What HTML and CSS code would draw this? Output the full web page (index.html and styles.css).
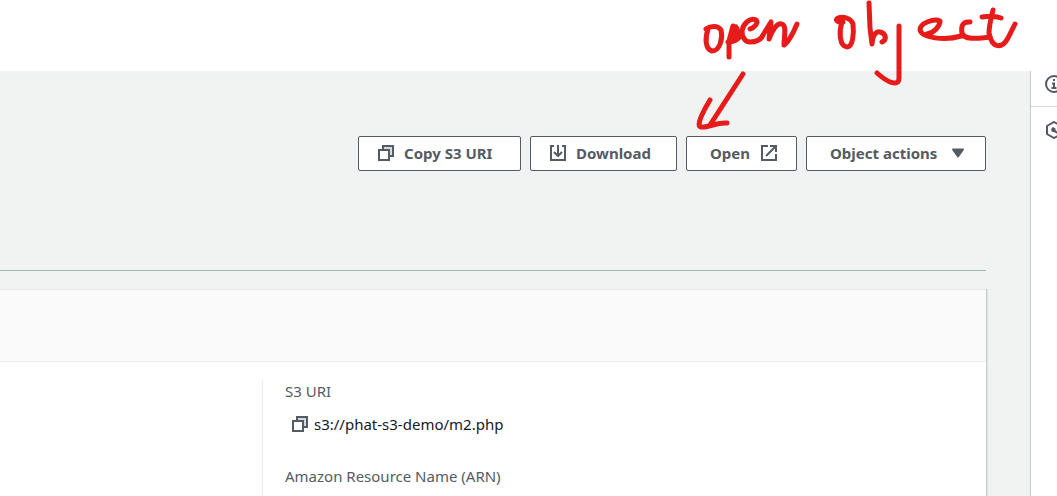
FILE: index.html
```html
<!DOCTYPE html>
<html lang="en">
<head>
<meta charset="utf-8">
<title>S3 object</title>
<link rel="stylesheet" href="styles.css">
</head>
<body>
<svg class="symbols" aria-hidden="true">
  <symbol id="copy" viewBox="0 0 16 16">
    <path fill="#d5dbdb" d="M5 5V1h10v10h-4V5z"/>
    <path d="M5 4V1h10v10h-3M1 5h10v10H1z"/>
  </symbol>
</svg>
<header class="topbar"></header>
<div class="shell">
  <main class="content">
    <div class="actions">
      <button class="btn btn-copy" type="button"><svg class="icon"><use href="#copy"/></svg>Copy S3 URI</button>
      <button class="btn btn-download" type="button"><svg class="icon" viewBox="0 0 16 16"><path d="M4 1H1v14h14V1h-3M8 0v11M4 7l4 4 4-4"/></svg>Download</button>
      <button class="btn btn-open" type="button">Open<svg class="icon" viewBox="0 0 16 16"><path d="M7 1H1v14h14V9M9 1h6v6M15 1L5 11"/></svg></button>
      <button class="btn btn-actions" type="button">Object actions<svg class="icon caret" viewBox="0 0 16 16"><path d="M3 4.500h10L8 11.500z"/></svg></button>
    </div>
    <section class="card">
      <div class="card-head"></div>
      <div class="card-body">
        <div></div>
        <dl class="details">
          <dt>S3 URI</dt>
          <dd><button class="copy" type="button" aria-label="Copy S3 URI"><svg class="icon"><use href="#copy"/></svg></button>s3://phat-s3-demo/m2.php</dd>
          <dt>Amazon Resource Name (ARN)</dt>
        </dl>
      </div>
    </section>
  </main>
  <aside class="rail">
    <button class="tool" type="button" aria-label="Info"><svg viewBox="0 0 18 18"><circle cx="9" cy="9" r="8"/><path d="M9 4v2M7 8.500h2V13M6.500 13h5"/></svg></button>
    <button class="tool" type="button" aria-label="Diagnose"><svg viewBox="0 0 18 18"><path d="M9 1l7 4v8l-7 4-7-4V5z"/><path class="solid" d="M6 8l2-2 2.500 1.500V9l3 3-1 1-3.500-2H7z"/></svg></button>
  </aside>
</div>
<svg class="ink" viewBox="0 0 340 140" role="img" aria-label="open object">
  <path d="M16 29C20 26 28 25 31 30C33 38 30 51 22 51C15 49 15 38 18 29"/>
  <path d="M43 26L39 41L39 57M38 42C44 40 50 32 46 27L40 40M38 42C46 42 50 38 52 32M60 29C64 28 69 23 66 20C60 17 53 24 52 31C52 37 55 42 60 42C67 42 71 40 73 35L81 22L79 39C82 31 87 22 92 24C97 26 94 37 94 45C99 42 104 31 107 24"/>
  <path d="M53 74L20 125M20 100C15 108 5 126 11 127C18 128 27 122 37 123"/>
  <path d="M153 22C148 23 144 20 148 18C153 16 161 18 163 24C164 33 163 47 157 47C149 46 149 31 152 22"/>
  <path d="M179 3L180 28L182 44C182 36 186 31 190 32C195 33 198 39 192 42"/>
  <path d="M209 26L209 78C209 87 198 83 187 73"/>
  <path d="M237 34C244 33 250 26 250 21C244 18 230 23 230 30C232 38 255 41 271 36M280 22C272 21 271 27 272 33C275 41 290 38 300 37"/>
  <path d="M303 10C301 18 299 26 299 33C302 49 312 49 318 38L325 24M292 17C299 16 306 16 311 18"/>
</svg>
</body>
</html>
```
FILE: styles.css
```css
* { box-sizing: border-box; }
html, body { height: 100%; }
body {
  margin: 0;
  display: flex;
  flex-direction: column;
  overflow: hidden;
  background: #fff;
  color: #16191f;
  font: 15px/22px "Noto Sans", "Open Sans", sans-serif;
}
.symbols { position: absolute; width: 0; height: 0; }
.topbar { flex: 0 0 71px; }
.shell { flex: 1; display: flex; min-height: 0; }
.content {
  flex: 1;
  display: flex;
  flex-direction: column;
  padding: 65px 44px 0 0;
  background: #f1f3f3;
}
.actions {
  display: flex;
  justify-content: flex-end;
  gap: 9px;
  padding-bottom: 99px;
  border-bottom: 1px solid #a2b8b6;
}
.btn {
  display: flex;
  align-items: center;
  gap: 10px;
  height: 35px;
  padding: 0 19px 2px;
  border: 1px solid #545b64;
  border-radius: 2px;
  background: #fff;
  color: #545b64;
  font: bold 15px/22px "Noto Sans", "Open Sans", sans-serif;
}
.btn-copy { width: 163px; }
.btn-download { width: 147px; }
.btn-open, .btn-actions { justify-content: space-between; padding-left: 23px; }
.btn-open { width: 111px; }
.btn-actions { width: 180px; }
.icon {
  flex: none;
  width: 16px;
  height: 16px;
  fill: none;
  stroke: #545b64;
  stroke-width: 2;
}
.caret path { fill: #545b64; stroke-linejoin: round; }
.card {
  flex: 1;
  display: flex;
  flex-direction: column;
  margin-top: 18px;
  border-top: 1px solid #e6eaea;
  background: #fff;
  box-shadow: 1px 0 0 #c3caca, 2px 0 1px #e3e7e7;
}
.card-head { height: 72px; background: #fafafa; border-bottom: 1px solid #eaeded; }
.card-body { flex: 1; display: grid; grid-template-columns: 262fr 724fr; padding-top: 18px; }
.details { margin: 0; padding-left: 22px; border-left: 1px solid #eaeded; }
.details dt { color: #545b64; }
.details dd { display: flex; align-items: center; gap: 6px; margin: 11px 0 30px; padding-left: 7px; }
.copy { display: flex; padding: 0; border: 0; background: none; }
.rail {
  flex: 0 0 27px;
  overflow: hidden;
  border-left: 1px solid #c1c9c9;
  background: #fff;
}
.tool {
  display: flex;
  align-items: center;
  width: 48px;
  height: 46px;
  padding: 0 0 0 14px;
  border: 0;
  background: #fff;
}
.tool:first-child { height: 36px; padding-bottom: 9px; border-bottom: 1px solid #d5dbdb; }
.tool svg { width: 18px; height: 18px; fill: none; stroke: #545b64; stroke-width: 2; }
.tool .solid { fill: #545b64; stroke: none; }
.ink {
  position: absolute;
  top: 0;
  left: 690px;
  width: 340px;
  height: 140px;
  fill: none;
  stroke: #e81b1b;
  stroke-width: 5;
  stroke-linecap: round;
  stroke-linejoin: round;
  pointer-events: none;
}
```
